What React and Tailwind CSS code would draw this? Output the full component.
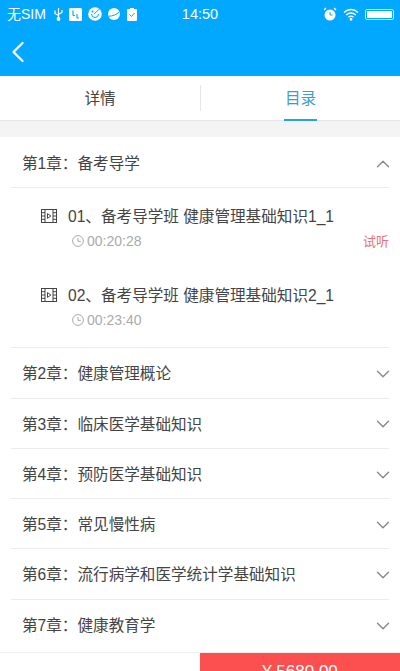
import { ChevronDown, ChevronUp, ChevronLeft } from "lucide-react";

const chapters = [
  "第2章：健康管理概论",
  "第3章：临床医学基础知识",
  "第4章：预防医学基础知识",
  "第5章：常见慢性病",
  "第6章：流行病学和医学统计学基础知识",
  "第7章：健康教育学",
];

function FilmIcon() {
  return (
    <svg width="16" height="14" viewBox="0 0 16 14" fill="none" stroke="#444" strokeWidth="1" className="shrink-0">
      <rect x="0.5" y="0.5" width="15" height="13" />
      <path d="M4 0.5v13M12 0.5v13M0.5 3.7h3.5M0.5 7h3.5M0.5 10.3h3.5M12 3.7h3.5M12 7h3.5M12 10.3h3.5" />
      <path d="M6.5 4.6v4.8l3.4-2.4z" />
    </svg>
  );
}

function ClockIcon() {
  return (
    <svg width="12" height="12" viewBox="0 0 12 12" fill="none" stroke="#aaa" strokeWidth="1" className="shrink-0">
      <circle cx="6" cy="6" r="5.4" />
      <path d="M6 3v3.4h2.8" />
    </svg>
  );
}

function StatusIcons() {
  return (
    <div className="flex items-center ml-2">
      <svg width="9" height="14" viewBox="0 0 9 14" fill="none" stroke="#fff" strokeWidth="1.2">
        <path d="M4.5 1v12M1 3.5v3l3.5 2M8 3v2.5L4.5 7.5" />
        <circle cx="4.5" cy="12" r="1.3" fill="#fff" />
      </svg>
      <svg width="13" height="13" viewBox="0 0 13 13" className="ml-[6px]">
        <rect width="13" height="13" rx="1.5" fill="#fff" />
        <path d="M4 2.5v5M4 7.5h2M8 6v4M8 10h2" stroke="#01a8fe" strokeWidth="1.2" fill="none" />
      </svg>
      <svg width="14" height="14" viewBox="0 0 14 14" className="ml-[6px]">
        <circle cx="7" cy="7" r="6.8" fill="#fff" />
        <path d="M3.5 7a3.5 3.5 0 0 0 7 0M6 7l6-5.5" stroke="#01a8fe" strokeWidth="1" fill="none" />
        <circle cx="4.6" cy="4.6" r="1" fill="#01a8fe" />
      </svg>
      <svg width="12" height="12" viewBox="0 0 12 12" className="ml-[6px]">
        <circle cx="6" cy="6" r="6" fill="#fff" />
        <path d="M0.5 8.2c4 0 8-1.4 11-4.4" stroke="#01a8fe" strokeWidth="1" fill="none" />
      </svg>
      <svg width="10" height="13" viewBox="0 0 10 13" className="ml-[7px]">
        <rect y="1" width="10" height="12" rx="1" fill="#fff" />
        <rect x="3" width="4" height="2" fill="#fff" />
        <path d="M2.5 6.5l2 2 3-3.5" stroke="#01a8fe" strokeWidth="1" fill="none" />
      </svg>
    </div>
  );
}

function Lesson({ title, time, trial }) {
  return (
    <div className="pl-[30px]">
      <div className="flex items-center gap-[11px] h-[22px]">
        <FilmIcon />
        <span className="text-[15.6px] text-[#444] whitespace-nowrap">{title}</span>
      </div>
      <div className="flex items-center justify-between h-[22px] mt-[3px] pl-[31px]">
        <div className="flex items-center gap-[3px]">
          <ClockIcon />
          <span className="text-[14px] text-[#aaa]">{time}</span>
        </div>
        {trial && <span className="text-[13px] text-[#e57373]">试听</span>}
      </div>
    </div>
  );
}

function Chapter({ title, open, last }) {
  const Icon = open ? ChevronUp : ChevronDown;
  return (
    <div className={`flex items-center justify-between h-[50.3px] pt-[2px] pl-[11px] ${last ? "" : "border-b border-[#ececec]"}`}>
      <span className="text-[15.6px] text-[#444]">{title}</span>
      <Icon size={22} color="#888" strokeWidth={1.5} className="-mr-[5px]" />
    </div>
  );
}

export default function App() {
  return (
    <div className="relative w-[400px] h-[671px] overflow-hidden bg-white font-['Liberation_Sans','Noto_Sans_CJK_SC',sans-serif]">
      {/* status bar + header */}
      <div className="bg-[#01a8fe] h-[76px] text-white">
        <div className="grid grid-cols-[1fr_auto_1fr] items-center h-[28px] pl-[6px] pr-[6px]">
          <div className="flex items-center pl-px">
            <span className="text-[14px]">无SIM</span>
            <StatusIcons />
          </div>
          <span className="text-[14.5px] pt-px">14:50</span>
          <div className="flex items-center justify-end gap-[6px]">
            <svg width="14" height="14" viewBox="0 0 14 14" fill="none">
              <circle cx="7" cy="8" r="5.5" fill="#fff" />
              <path d="M7 5v3h2.5" stroke="#01a8fe" strokeWidth="1" />
              <path d="M1 3l2-2M13 3l-2-2" stroke="#fff" strokeWidth="1.4" />
            </svg>
            <svg width="16" height="13" viewBox="0 0 16 13" fill="none" stroke="#fff" strokeWidth="1.3">
              <path d="M1 4.5c4-4 10-4 14 0M3.2 7c2.8-2.7 6.8-2.7 9.6 0M5.4 9.3c1.5-1.3 3.7-1.3 5.2 0" />
              <circle cx="8" cy="11.3" r="0.8" fill="#fff" />
            </svg>
            <div className="w-[29px] h-[11px] rounded-[2px] border border-[#bfe8fb] p-[1px]">
              <div className="h-full bg-white rounded-[1px]" />
            </div>
          </div>
        </div>
        <div className="mt-[6px]">
          <ChevronLeft size={36} color="#fff" strokeWidth={1.5} />
        </div>
      </div>

      {/* tabs */}
      <div className="flex items-center h-[45px] bg-white border-b border-[#e6e6e6]">
        <div className="w-[200px] h-full pt-[2px] flex items-center justify-center text-[15.6px] text-[#444]">详情</div>
        <div className="w-px h-[26px] bg-[#e6e6e6]" />
        <div className="flex-1 h-full flex items-center justify-center">
          <div className="relative h-full pt-[2px] flex items-center text-[15.6px] text-[#3d9bd4]">
            目录
            <div className="absolute bottom-[-1px] left-[-1px] right-[-1px] h-[2px] bg-[#29a3dc]" />
          </div>
        </div>
      </div>
      <div className="h-[16px] bg-[#f4f4f4]" />

      {/* chapter list */}
      <div className="mx-[11px] pt-px">
        <Chapter title="第1章：备考导学" open />
        <div className="flex flex-col gap-[32px] pt-[17px] pb-[16px] border-b border-[#ececec]">
          <Lesson title="01、备考导学班 健康管理基础知识1_1" time="00:20:28" trial />
          <Lesson title="02、备考导学班 健康管理基础知识2_1" time="00:23:40" />
        </div>
        {chapters.map((c, i) => (
          <Chapter key={c} title={c} last={i === chapters.length - 1} />
        ))}
      </div>

      {/* buy bar */}
      <div className="absolute left-0 right-0 bottom-0 h-[19px] bg-white border-t border-[#eee] flex justify-end">
        <div className="w-[200px] h-[19px] bg-[#fc5050] text-white text-[17px] text-center leading-[38px] overflow-hidden">¥ 5680.00</div>
      </div>
    </div>
  );
}
